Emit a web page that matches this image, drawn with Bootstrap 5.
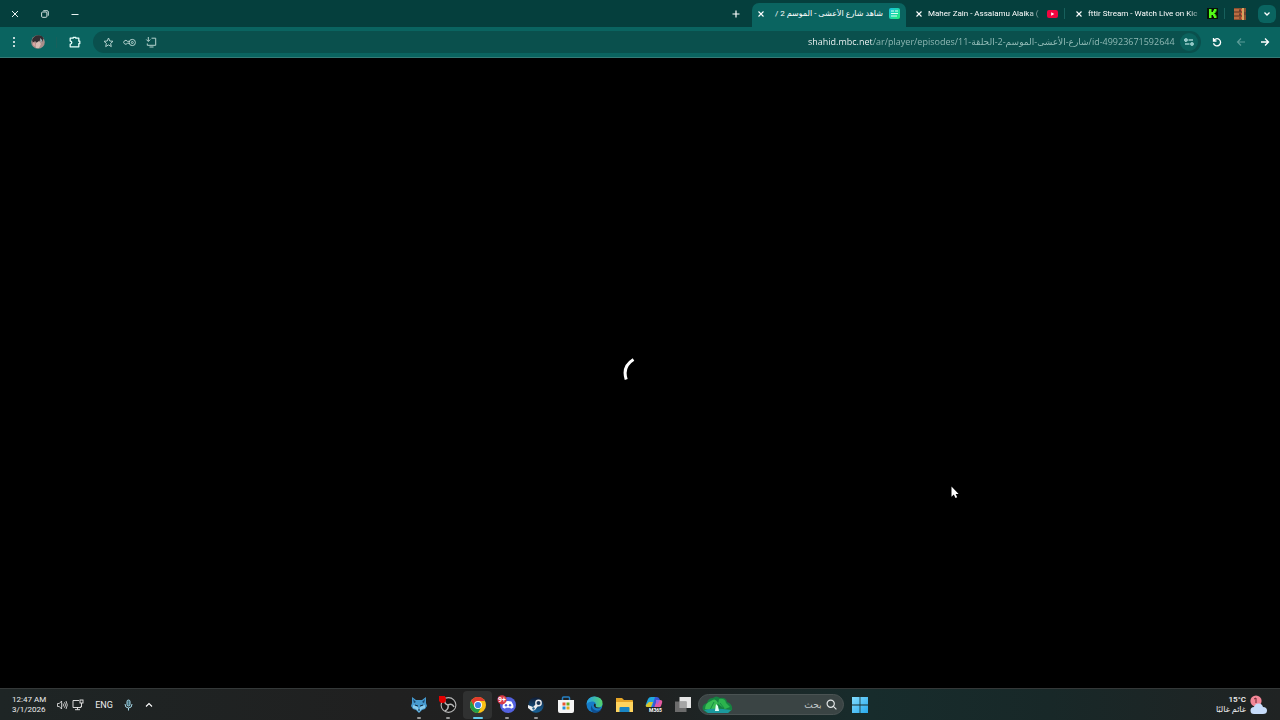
<!DOCTYPE html>
<html lang="ar" dir="ltr">
<head>
<meta charset="utf-8">
<meta name="viewport" content="width=device-width, initial-scale=1">
<title>شاهد شارع الأعشى - الموسم 2</title>
<link href="https://cdn.jsdelivr.net/npm/bootstrap@5.3.0/dist/css/bootstrap.min.css" rel="stylesheet">
<style>
  body { font-family: Roboto, "DejaVu Sans", sans-serif; font-size: 8px; line-height: 10px; color: #e8f3f1; background: #000; }
  svg { display: block; flex: none; }
  .plain { background: none; border: 0; padding: 0; color: inherit; display: flex; align-items: center; justify-content: center; flex: none; }
  .strip { height: 27px; background: #053f3d; }
  .win-btn { width: 30px; height: 27px; }
  .tab-item { width: 160px; height: 27px; padding: 0 1px 0 10px; display: flex; align-items: center; gap: 6px; }
  .tab-live { width: 154px; height: 24px; margin-top: 3px; background: #0a6460; border-radius: 7px 7px 0 0; padding: 0 6px 3px; }
  .tab-title { flex: 1 1 0; min-width: 0; overflow: hidden; white-space: nowrap; color: #fff; text-decoration: none; }
  .fade-end { -webkit-mask-image: linear-gradient(90deg, #000 88%, transparent); mask-image: linear-gradient(90deg, #000 88%, #0004); }
  .divider { width: 1px; height: 11px; background: #17605c; flex: none; }
  .chevron { width: 18px; height: 18px; border-radius: 6px; background: #0a6460; }
  .toolbar { height: 31px; background: #0a6460; border-bottom: 1px solid #357b77; padding: 0 3px 0 2px; }
  .toolbar .divider { margin: 0 6px; }
  .tool { width: 24px; height: 24px; }
  .omnibox { height: 22px; border-radius: 11px; background: #0a504d; color: #b4d2ce; margin: 0 4px 0 6px; padding: 0 3px 0 10px; }
  .omni-actions { gap: 9px; }
  .url { background: linear-gradient(90deg, #fff 65px, #98bfbb 65px); -webkit-background-clip: text; background-clip: text; -webkit-text-fill-color: transparent; border: 0; outline: 0; padding: 0; width: 368px; height: 16px; font-family: "Open Sans", "DejaVu Sans", sans-serif; font-size: 9px; line-height: 16px; }
  .site { width: 18px; height: 18px; border-radius: 9px; background: #0b625d; color: #dff; }
  .screen { background: #000; }
  .pointer { left: 74.3%; top: 68%; }
  .taskbar { display: grid; grid-template-columns: 1fr auto 1fr; height: 32px; background: linear-gradient(90deg, #1e2525, #202020 30%, #202121 50%, #172c2c 68%, #182828 82%, #202323); border-top: 1px solid #343838; color: #eee; }
  .apps { width: 293px; }
  .app { flex: 1 1 0; height: 28px; position: relative; border-radius: 4px; }
  .app.running::after { content: ""; position: absolute; bottom: 0; left: 50%; width: 4px; height: 2px; margin-left: -2px; background: #999; border-radius: 1px; }
  .app.current { background: #303131; }
  .app.current::after { width: 10px; margin-left: -5px; background: #64cbed; }
  .find { width: 146px; height: 21px; border-radius: 11px; background: #3a4444; border: 1px solid #4a5353; padding: 0 6px 0 3px; }
  .find input { background: none; border: 0; outline: 0; padding: 0; color: #d0d4d4; min-width: 0; flex: 1 1 0; font-size: 9px; }
  .find input::placeholder { color: #c5cbcb; opacity: 1; }
  .clock { width: 37px; margin-left: 12px; white-space: nowrap; }
  .lang { width: 24px; font-size: 9px; }
</style>
</head>
<body>
<div class="d-flex flex-column vh-100">

  <header>
    <div class="strip d-flex align-items-center">
      <button class="plain win-btn" aria-label="Close window"><svg width="8" height="8" viewBox="0 0 8 8" stroke="currentColor"><path d="M1 1l6 6M7 1L1 7"/></svg></button>
      <button class="plain win-btn" aria-label="Restore"><svg width="8" height="8" viewBox="0 0 8 8" fill="none" stroke="currentColor" stroke-width=".9"><rect x=".6" y="2" width="5.3" height="5.3" rx="1"/><path d="M2.3.7h3.8q1.2 0 1.2 1.2v3.8"/></svg></button>
      <button class="plain win-btn" aria-label="Minimize"><svg width="8" height="8" viewBox="0 0 8 8" stroke="currentColor"><path d="M.5 4.5h7"/></svg></button>

      <button class="plain ms-auto me-2 p-1" aria-label="New tab"><svg width="8" height="8" viewBox="0 0 8 8" stroke="#fff" stroke-width="1.2"><path d="M4 .5v7M.5 4h7"/></svg></button>

      <div class="tab-item tab-live">
        <button class="plain" aria-label="Close tab"><svg width="6" height="6" viewBox="0 0 6 6" stroke="#fff" stroke-width="1.1"><path d="M.5.5l5 5M5.500.5l-5 5"/></svg></button>
        <a href="#" class="tab-title" dir="rtl">شاهد شارع الأعشى - الموسم 2 /</a>
        <svg width="11" height="11" viewBox="0 0 11 11"><defs><linearGradient id="sh" x2="1" y2="1"><stop stop-color="#16bfe0"/><stop offset="1" stop-color="#24ef78"/></linearGradient></defs><rect width="11" height="11" rx="2" fill="url(#sh)"/><path d="M2 3h3m1 0h3M2 5.500h7M2 8h6" stroke="#d9fff1" stroke-width="1.2"/></svg>
      </div>
      <div class="tab-item">
        <button class="plain" aria-label="Close tab"><svg width="6" height="6" viewBox="0 0 6 6" stroke="#fff" stroke-width="1.1"><path d="M.5.5l5 5M5.500.5l-5 5"/></svg></button>
        <a href="#" class="tab-title fade-end">Maher Zain - Assalamu Alaika (</a>
        <svg width="11" height="8" viewBox="0 0 11 8"><rect width="11" height="8" rx="2" fill="#f0053f"/><path d="M4.200 2.200v3.600L7.300 4z" fill="#fff"/></svg>
        <span class="divider"></span>
      </div>
      <div class="tab-item">
        <button class="plain" aria-label="Close tab"><svg width="6" height="6" viewBox="0 0 6 6" stroke="#fff" stroke-width="1.1"><path d="M.5.5l5 5M5.500.5l-5 5"/></svg></button>
        <a href="#" class="tab-title fade-end">fttir Stream - Watch Live on Kic</a>
        <svg width="11" height="11" viewBox="0 0 11 11"><rect width="11" height="11" fill="#071307"/><path d="M2 1h2.500v3H6V2.500h1V1h2.500v2.500h-1V5h-1v1h1v1.500h1V10H7V8.500H6V7H4.500v3H2z" fill="#53fc18"/></svg>
        <span class="divider"></span>
      </div>
      <a href="#" class="mx-2" aria-label="Pinned tab"><svg width="12" height="12" viewBox="0 0 12 12"><rect width="12" height="12" fill="#8a4f30"/><path d="M0 1h5v2H0zM0 5h5v2H0zM0 9h5v2H0z" fill="#b86c42"/><path d="M8 0h2v12H8z" fill="#d3a760"/><path d="M5 2h2v2H5zM5 6h2v2H5zM10 4h2v3h-2z" fill="#6b4030"/><path d="M7 1h1v2H7zM7 5h1v2H7zM7 9h1v2H7z" fill="#e35c3d"/></svg></a>
      <button class="plain chevron ms-1 me-1" aria-label="Search tabs"><svg width="8" height="6" viewBox="0 0 8 6" fill="none" stroke="#fff" stroke-width="1.300"><path d="M1.500 1.500L4 4l2.500-2.500"/></svg></button>
    </div>

    <div class="toolbar d-flex align-items-center">
      <button class="plain tool" aria-label="Menu"><svg width="4" height="12" viewBox="0 0 4 12" fill="#fff"><circle cx="2" cy="2" r="1"/><circle cx="2" cy="6" r="1"/><circle cx="2" cy="10" r="1"/></svg></button>
      <button class="plain tool" aria-label="Profile"><svg width="14" height="14" viewBox="0 0 14 14"><circle cx="7" cy="7" r="6.800" fill="#a98f8b"/><path d="M1 5q2-5 7-4.700 3 .2 4.800 3L11 7 9 5 7 9 4 6 2 8z" fill="#332d31"/><path d="M5 8l3-2 2 3-2 4H5z" fill="#d8bcb4"/><path d="M9 3l2 2-1 3z" fill="#b4d2d7"/><path d="M2 7l2 1 1 4-3-2z" fill="#dba5a0"/></svg></button>
      <span class="divider"></span>
      <button class="plain tool" aria-label="Extensions"><svg width="12" height="12" viewBox="0 0 12 12" fill="none" stroke="#e6fffb" stroke-width="1.300" stroke-linejoin="round"><path d="M1.200 2.200h3V1.400h2.600v.8h3v3h1v2.400h-1v3.200H1.200V8.200q1.600-.2 1.600-1.600T1.200 5z"/></svg></button>
      <div class="omnibox d-flex flex-fill align-items-center">
        <div class="omni-actions d-flex align-items-center">
          <button class="plain" aria-label="Bookmark"><svg width="11" height="11" viewBox="0 0 11 11" fill="none" stroke="currentColor"><path d="M5.500 1l1.300 3 3.200.3-2.400 2.100.7 3.200-2.800-1.700-2.800 1.700.7-3.200L1 4.300 4.200 4z"/></svg></button>
          <button class="plain" aria-label="Password key"><svg width="13" height="9" viewBox="0 0 13 9" fill="none" stroke="currentColor"><circle cx="9.300" cy="4.500" r="3.100"/><circle cx="9.300" cy="4.500" r="1"/><path d="M6.200 3.300H4.300A1.900 1.900 0 1 0 4.300 5.300H6.200"/></svg></button>
          <button class="plain" aria-label="Install app"><svg width="12" height="11" viewBox="0 0 12 11" fill="none" stroke="currentColor"><path d="M6.500 1.200h4.200v7.100H2.300V6.500M4.500 10h4M3.300 0v4.200M1.300 2.500l2 2 2-2"/></svg></button>
        </div>
        <input class="url ms-auto me-1" type="text" dir="ltr" aria-label="Address" value="shahid.mbc.net/ar/player/episodes/شارع-الأعشى-الموسم-2-الحلقة-11/id-49923671592644">
        <button class="plain site" aria-label="Site information"><svg width="10" height="8" viewBox="0 0 10 8" fill="none" stroke="currentColor" stroke-width="1.100"><circle cx="2" cy="2" r="1.200"/><path d="M4.500 2H9M1 6h4.500"/><circle cx="8" cy="6" r="1.200"/></svg></button>
      </div>
      <button class="plain tool" aria-label="Reload"><svg width="10" height="10" viewBox="0 0 10 10" fill="none" stroke="#fff" stroke-width="1.300"><path d="M1.500 1v3h3M1.700 3.800A3.600 3.600 0 1 1 1.500 6.300"/></svg></button>
      <button class="plain tool" aria-label="Forward"><svg width="10" height="10" viewBox="0 0 10 10" fill="none" stroke="#5b9b97" stroke-width="1.200"><path d="M9 5H1.500M5 1.500L1.500 5 5 8.500"/></svg></button>
      <button class="plain tool" aria-label="Back"><svg width="10" height="10" viewBox="0 0 10 10" fill="none" stroke="#fff" stroke-width="1.300"><path d="M1 5h7.500M5 1.500L8.500 5 5 8.500"/></svg></button>
    </div>
  </header>

  <main class="screen flex-fill position-relative d-flex align-items-center justify-content-center">
    <svg width="34" height="34" viewBox="0 0 34 34" fill="none" stroke="#fff" stroke-width="3" role="img" aria-label="Loading"><path d="M10.500 3.500Q-1 10.500 3.200 23.500"/></svg>
    <svg class="pointer position-absolute" width="8" height="13" viewBox="0 0 8 13"><path d="M.5.5v10.200l2.300-2.100L4.500 12l1.700-.8-1.600-3.300h3z" fill="#fff"/></svg>
  </main>

  <footer class="taskbar">
    <div class="d-flex align-items-center">
      <div class="clock">12:47 AM<br>3/1/2026</div>
      <svg class="ms-2 me-1" width="11" height="10" viewBox="0 0 11 10" fill="none" stroke="currentColor" stroke-width=".8"><path d="M.5 3.500h1.800L4.600 1v8L2.300 6.500H.5zM6 3.500q1 1.500 0 3M7.500 2.200q2 2.800 0 5.600M9 1q2.600 4 0 8"/></svg>
      <svg width="12" height="12" viewBox="0 0 12 12" fill="none" stroke="currentColor" stroke-width=".9"><path d="M7 1.500H1v7h8V7M3 10.700h5M5.500 8.500v2"/><rect x="8" y="1" width="3" height="3"/><path d="M9.500 4v4"/></svg>
      <button class="plain lang ms-2" aria-label="Input language">ENG</button>
      <svg class="ms-2" width="9" height="12" viewBox="0 0 9 12" fill="none" stroke="#a5d6e6"><rect x="3" y="1" width="3" height="6" rx="1.500" fill="#416d7a"/><path d="M1 5q0 4 3.500 4T8 5M4.500 9v2.500"/></svg>
      <button class="plain ms-2 p-1" aria-label="Hidden icons"><svg width="8" height="6" viewBox="0 0 8 6" fill="none" stroke="#fff" stroke-width="1.100"><path d="M1 4.500l3-3 3 3"/></svg></button>
    </div>

    <div class="d-flex align-items-center">
      <nav class="apps d-flex" aria-label="Apps">
        <button class="plain app running" aria-label="Wolf"><svg width="16" height="16" viewBox="0 0 16 16"><path d="M1 0l4 3h6l4-3v6l1 3-2 3-3 1-3 3-3-3-3-1-2-3 1-3z" fill="#479bd0"/><path d="M2 2l3 3-2 1zM14 2l-3 3 2 1z" fill="#19476f"/><path d="M2 8l5 2 1 5-3-3-3-1zM14 8L9 10l-1 5 3-3 3-1z" fill="#8accec"/><path d="M4 8l3 1M12 8l-3 1M7 13h2" stroke="#13283b"/></svg></button>
        <button class="plain app running" aria-label="OBS"><svg width="18" height="18" viewBox="0 0 18 18"><circle cx="9.500" cy="9" r="7.400" fill="#161616" stroke="#b8b8b8" stroke-width="1.100"/><path d="M9 9Q5 8 6 4M9 9q4-2 6 2M9 9q1 4-3 6" fill="none" stroke="#b8b8b8" stroke-width="1.500"/><circle cx="3.500" cy="3.500" r="3.500" fill="#e20000"/><path d="M0 0h6v5H0z" fill="#e20000"/></svg></button>
        <button class="plain app running current" aria-label="Chrome"><svg width="16" height="16" viewBox="0 0 16 16"><circle cx="8" cy="8" r="8" fill="#fbc116"/><path d="M1.070 4A8 8 0 0 1 14.930 4H8L4.540 10z" fill="#e33b2e"/><path d="M1.070 4A8 8 0 0 0 8 16l3.460-6H4.540z" fill="#229c49"/><circle cx="8" cy="8" r="4" fill="#fff"/><circle cx="8" cy="8" r="3.100" fill="#3c80e8"/></svg></button>
        <button class="plain app running" aria-label="Discord"><svg width="20" height="20" viewBox="0 0 20 20"><circle cx="11" cy="10" r="8" fill="#5361df"/><path d="M7.500 6.500q3.500-1 7 0 2 3 2 6l-2.500 1.300-.8-1.100H8.800L8 13.800l-2.500-1.300q0-3 2-6z" fill="#fff"/><circle cx="9" cy="10.200" r="1.200" fill="#5361df"/><circle cx="13" cy="10.200" r="1.200" fill="#5361df"/><circle cx="5" cy="4.800" r="4.600" fill="#dc3947"/><text x="1" y="7.300" font-size="7" font-weight="700" fill="#fff">9+</text></svg></button>
        <button class="plain app running" aria-label="Steam"><svg width="16" height="16" viewBox="0 0 16 16"><defs><linearGradient id="st" x2="0" y2="1"><stop stop-color="#101d36"/><stop offset="1" stop-color="#17649b"/></linearGradient></defs><circle cx="8" cy="8" r="7.700" fill="url(#st)"/><path d="M0 8l5 2 3-3 2 2-3 4-3 1-4-3z" fill="#eee"/><circle cx="10.500" cy="6" r="3.400" fill="#eee"/><circle cx="10.500" cy="6" r="2" fill="#193554"/><circle cx="5.500" cy="11.500" r="1.200" fill="#25628c"/></svg></button>
        <button class="plain app" aria-label="Store"><svg width="16" height="17" viewBox="0 0 16 17"><path d="M4.500 5V2q0-1 1-1h5q1 0 1 1v3" fill="none" stroke="#2680c4" stroke-width="1.500"/><path d="M0 4h16v11q0 2-2 2H2q-2 0-2-2z" fill="#f5f5f5"/><path d="M4.500 6.500h3v3h-3z" fill="#e85732"/><path d="M8.500 6.500h3v3h-3z" fill="#68a91f"/><path d="M4.500 10.500h3v3h-3z" fill="#258fd5"/><path d="M8.500 10.500h3v3h-3z" fill="#e5ac1e"/></svg></button>
        <button class="plain app" aria-label="Edge"><svg width="17" height="17" viewBox="0 0 17 17"><defs><linearGradient id="ed" x2="1"><stop stop-color="#239eec"/><stop offset="1" stop-color="#55d46c"/></linearGradient></defs><circle cx="8.500" cy="8.500" r="8" fill="#167bc7"/><path d="M.5 8Q1.500.5 8.500.5q8 .5 8 7 0 4-4.500 4-3 0-2.300-2Q10.500 6 7 5.500 3 5 .5 8z" fill="url(#ed)"/><path d="M6 9q-.5 5 5 5.700 3-.2 4.500-1.700-3 5-8 3.400Q3 14 6 9z" fill="#104f91"/><path d="M8.500 7.500Q7 9 8.500 11q2 2.300 6.500.7Q12 12 10.500 11.300 9 10.500 9.700 9q.5-1-1.200-1.500z" fill="#202121"/></svg></button>
        <button class="plain app" aria-label="Files"><svg width="17" height="16" viewBox="0 0 17 16"><path d="M0 1h6l2 2h8q1 0 1 1v11H0z" fill="#e6a527"/><path d="M0 5h17v10H0z" fill="#ffd45e"/><path d="M3.500 15v-4q0-1 1-1h8q1 0 1 1v4z" fill="#1985c4"/></svg></button>
        <button class="plain app" aria-label="M365"><svg width="18" height="17" viewBox="0 0 18 17"><path d="M6 1h6L8 11H3q-3 0-2-3l2-5q1-2 3-2z" fill="#20a7df"/><path d="M4 6h4l-2 5H3q-3 0-2-2z" fill="#d8c52d"/><path d="M10 1h2q2 0 3 3l-5 7H7z" fill="#3a57d6"/><path d="M12 4h3q3 0 2 3l-1 3q-1 2-3 2H9z" fill="#e35aa1"/><path d="M11 4h4l-3 5z" fill="#9b63e4"/><path d="M4 11h13v6H4z" fill="#202121"/><text x="4" y="16" font-size="5" font-weight="700" fill="#fff">M365</text></svg></button>
        <button class="plain app" aria-label="Task view"><svg width="16" height="15" viewBox="0 0 16 15"><path d="M4.500 0H16v11H4.500z" fill="#e5e5e5"/><path d="M0 4.500h11.500V15H0z" fill="#747474" fill-opacity=".9"/><path d="M4.500 4.500h7V11h-7z" fill="#a5a5a5"/></svg></button>
      </nav>
      <label class="find d-flex align-items-center">
        <svg width="31" height="17" viewBox="0 0 31 17"><path d="M1 14q-2-5 4-7 1-5 6-5 3-3 7 0 6-1 7 4 6 2 5 8l-4 3H5z" fill="#168241"/><path d="M3 13q0-6 6-8 4-4 7 2l-3 8z" fill="#38bd53"/><path d="M17 3q6-1 7 4l4 4-5 2-7-5z" fill="#2bb34d"/><path d="M8 14l4-8M22 12l-4-5" stroke="#178a45"/><path d="M2 14q10-3 27 0l-3 3H6z" fill="#1b999d"/><path d="M14 8l2 2 1 5h-4z" fill="#e6fff6"/></svg>
        <input type="search" dir="rtl" class="me-1 text-end" placeholder="بحث" aria-label="بحث">
        <svg width="11" height="11" viewBox="0 0 11 11" fill="none" stroke="#e4e8e8" stroke-width="1.200"><circle cx="4.700" cy="4.700" r="3.600"/><path d="M7.400 7.400l3 3"/></svg>
      </label>
      <button class="plain px-2" aria-label="Start"><svg width="16" height="16" viewBox="0 0 16 16"><defs><linearGradient id="wn" x2="1" y2="1"><stop stop-color="#82dcff"/><stop offset="1" stop-color="#28a9ec"/></linearGradient></defs><path d="M0 0h7.600v7.600H0zM8.400 0H16v7.600H8.400zM0 8.400h7.600V16H0zM8.400 8.400H16V16H8.400z" fill="url(#wn)"/></svg></button>
    </div>

    <div class="d-flex align-items-center justify-content-end pe-2 me-1">
      <div class="text-end me-1"><span class="fw-semibold">15°C</span><br><span dir="rtl">غائم غالبًا</span></div>
      <svg width="18" height="20" viewBox="0 0 18 20"><circle cx="6" cy="6" r="5.600" fill="#f38798"/><path d="M4 4l2-1v5" stroke="#6b2430" fill="none"/><path d="M4 19a3.500 3.500 0 0 1 0-7q1-4 5-3.500 3 .2 4 3.500 4 0 4 3.500T13 19z" fill="#c6dcfa"/></svg>
    </div>
  </footer>
</div>
<script src="https://cdn.jsdelivr.net/npm/bootstrap@5.3.0/dist/js/bootstrap.bundle.min.js"></script>
</body>
</html>
